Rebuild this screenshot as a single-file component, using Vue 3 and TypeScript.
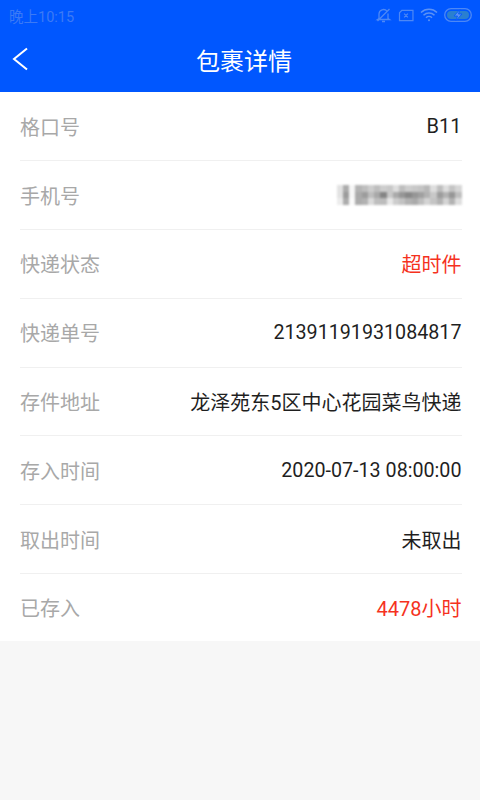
<script setup lang="ts">
interface Row { label: string; value: string; red?: boolean; blur?: boolean; num?: boolean }
const rows: Row[] = [
  { label: '格口号', value: 'B11' },
  { label: '手机号', value: '', blur: true },
  { label: '快递状态', value: '超时件', red: true },
  { label: '快递单号', value: '21391191931084817', num: true },
  { label: '存件地址', value: '龙泽苑东5区中心花园菜鸟快递' },
  { label: '存入时间', value: '2020-07-13 08:00:00', num: true },
  { label: '取出时间', value: '未取出' },
  { label: '已存入', value: '4478小时', red: true },
]
const mosaic: number[] = [
  226, 172, 246, 180, 190, 205, 190, 205, 200, 222, 190, 205, 200, 196, 184, 222, 190, 222, 196, 214,
  226, 156, 246, 170, 156, 190, 168, 132, 200, 170, 150, 136, 150, 160, 178, 200, 156, 178, 150, 190,
  236, 172, 250, 172, 178, 218, 190, 188, 232, 205, 194, 178, 170, 190, 212, 196, 178, 212, 178, 222,
]
</script>

<template>
  <div class="page">
    <header class="head">
      <div class="status">
        <span class="time">晚上10:15</span>
        <div class="icons">
          <svg width="17" height="16" viewBox="0 0 17 16" fill="none" stroke="#4d88f5" stroke-width="1.3"><path d="M4 11.500V7a4.500 4.500 0 0 1 8-2.800M13 6.500v5l1.500 1H2.500L4 11.500M7 14.500h3M2.500 14 14.500 2"/></svg>
          <svg width="16" height="13" viewBox="0 0 17 14" fill="none" stroke="#4d88f5" stroke-width="1.3"><path d="M4 1.500h12v11H1.500V4zM6.500 5l4 4M10.500 5l-4 4"/></svg>
          <svg width="18" height="14" viewBox="0 0 18 14" fill="none" stroke="#5c92f5" stroke-width="1.500"><path d="M1 4.500a11.500 11.500 0 0 1 16 0M3.500 7.200a8 8 0 0 1 11 0M6 9.700a4.300 4.300 0 0 1 6 0"/><circle cx="9" cy="12.300" r="1" fill="#5c92f5" stroke="none"/></svg>
          <svg width="28" height="14" viewBox="0 0 28 14"><rect x=".7" y=".7" width="26.600" height="12.600" rx="6.300" fill="none" stroke="#4d88f5" stroke-width="1.300"/><rect x="3" y="3" width="22" height="8" rx="4" fill="#2a7fd0"/><path d="M16 1.500 10 8h3.500L12 12.500 18 6h-3.500z" fill="#5c92f5" stroke="#0057ff" stroke-width=".8"/></svg>
        </div>
      </div>
      <div class="bar">
        <svg class="back" width="18" height="24" viewBox="0 0 18 24" fill="none" stroke="#fff" stroke-width="2"><path d="M16 1.500 3 12 16 22.500"/></svg>
        <h1 class="title">包裹详情</h1>
      </div>
    </header>
    <main class="list">
      <div v-for="r in rows" :key="r.label" class="row">
        <span class="label">{{ r.label }}</span>
        <div v-if="r.blur" class="mosaic">
          <i v-for="(g, i) in mosaic" :key="i" :style="{ background: `rgb(${g},${g},${g})` }"></i>
        </div>
        <span v-else class="value" :class="{ red: r.red, num: r.num }">{{ r.value }}</span>
      </div>
    </main>
  </div>
</template>

<style scoped>
.page {
  width: 480px;
  height: 800px;
  background: #f7f7f7;
  font-family: Roboto, "Noto Sans CJK SC", sans-serif;
  overflow: hidden;
}
.head { background: #0057ff; height: 92px; }
.status {
  height: 30px;
  display: flex;
  align-items: center;
  justify-content: space-between;
  padding: 0 8px 0 9px;
}
.time { font-size: 14.500px; color: #3c7af5; }
.icons { display: flex; align-items: center; gap: 6px; }
.bar {
  height: 58px;
  position: relative;
  display: flex;
  align-items: center;
  justify-content: center;
  padding-left: 8px;
}
.back { position: absolute; left: 11px; top: 17px; }
.title { margin: 0; font-size: 24px; font-weight: 400; color: #fff; }
.list { background: #fff; padding: 0.400px 18.500px 0 20px; }
.row {
  height: 68.800px;
  display: flex;
  align-items: center;
  justify-content: space-between;
  border-bottom: 1px solid #f0f0f0;
  box-sizing: border-box;
}
.row:last-child { border-bottom: 0; height: 67px; }
.label { font-size: 20px; color: #a8a8a8; }
.value { font-size: 20px; color: #1f1f1f; }
.num { font-size: 19.700px; }
.red { color: #f5321e; }
.mosaic {
  display: grid;
  grid-template-columns: repeat(20, 6.250px);
  grid-auto-rows: 6.700px;
  filter: blur(0.800px);
}
</style>
